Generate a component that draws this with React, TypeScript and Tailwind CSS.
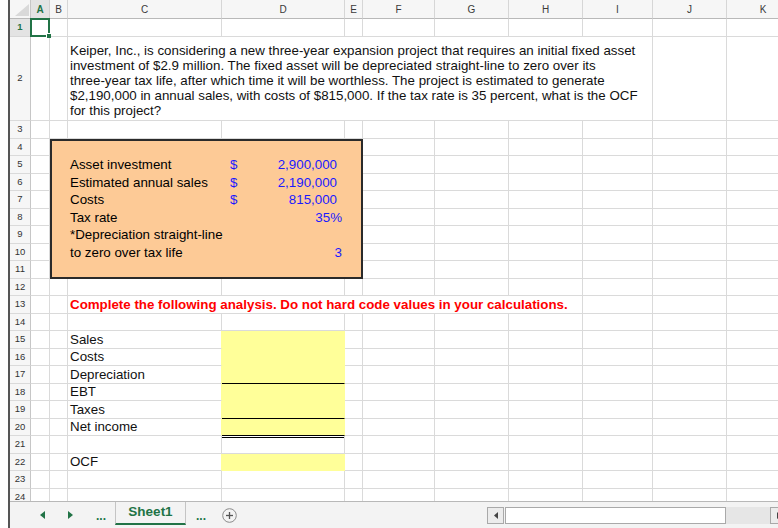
import React from "react";

const COLS = ["A", "B", "C", "D", "E", "F", "G", "H", "I", "J", "K"];

const LABELS: Record<number, string> = {
  15: "Sales",
  16: "Costs",
  17: "Depreciation",
  18: "EBT",
  19: "Taxes",
  20: "Net income",
  22: "OCF",
};

function GreenTri({ dir }: { dir: "l" | "r" }) {
  return (
    <svg width="5" height="8" viewBox="0 0 5 8">
      {dir === "l" ? <polygon points="5,0 5,8 0,4" fill="#217346" /> : <polygon points="0,0 0,8 5,4" fill="#217346" />}
    </svg>
  );
}

function OrangeBox() {
  const label = "col-start-2 flex items-center pl-[2px] whitespace-nowrap text-black";
  const val = "col-start-3 flex items-center justify-between text-[#1a1aff] whitespace-nowrap";
  return (
    <div className="row-span-8 col-span-4 bg-[#fdca96] border-2 border-[#2a2a2a] grid grid-cols-[16px_154px_123px_16px] grid-rows-[15.5px_repeat(6,17.5px)_15.5px] text-[13.33px] leading-[15px]">
      <div className={`${label} row-start-2`}>Asset investment</div>
      <div className={`${val} row-start-2 pl-[8px] pr-[8px]`}>
        <span>$</span>
        <span>2,900,000</span>
      </div>
      <div className={`${label} row-start-3`}>Estimated annual sales</div>
      <div className={`${val} row-start-3 pl-[8px] pr-[8px]`}>
        <span>$</span>
        <span>2,190,000</span>
      </div>
      <div className={`${label} row-start-4`}>Costs</div>
      <div className={`${val} row-start-4 pl-[8px] pr-[8px]`}>
        <span>$</span>
        <span>815,000</span>
      </div>
      <div className={`${label} row-start-5`}>Tax rate</div>
      <div className="col-start-3 row-start-5 flex items-center justify-end pr-[3px] text-[#1a1aff]">35%</div>
      <div className={`${label} row-start-6`}>*Depreciation straight-line</div>
      <div className={`${label} row-start-7`}>to zero over tax life</div>
      <div className="col-start-3 row-start-7 flex items-center justify-end pr-[3px] text-[#1a1aff]">3</div>
    </div>
  );
}

function dClass(r: number): string {
  if (r === 15 || r === 16 || r === 18 || r === 22) return "bg-[#ffff99] border-r border-b border-[#ffff99]";
  if (r === 17 || r === 19 || r === 20) return "bg-[#ffff99] border-r border-b border-r-[#ffff99] border-b-black";
  return "border-r border-b border-[#dadada]";
}

export default function App() {
  const cells: React.ReactNode[] = [];

  cells.push(
    <div key="corner" className="relative bg-[#f6f6f6] border-r border-b border-r-[#c6c6c6] border-b-[#b9b9b9]">
      <svg className="absolute right-[1px] bottom-[2px]" width="14" height="12" viewBox="0 0 14 12">
        <polygon points="0,12 14,12 14,0" fill="#d9d9d9" />
      </svg>
    </div>
  );
  COLS.forEach((c, i) =>
    cells.push(
      <div
        key={"h" + c}
        className={
          i === 0
            ? "flex items-center justify-center border-r border-b border-r-[#d0d0d0] border-b-[#b9b9b9] bg-[#e3e3e3] text-[10px] font-bold text-[#217346]"
            : "flex items-center justify-center border-r border-b border-r-[#d6d6d6] border-b-[#b9b9b9] bg-[#f6f6f6] text-[10px] text-[#3a3a3a]"
        }
      >
        {c}
      </div>
    )
  );

  for (let r = 1; r <= 24; r++) {
    cells.push(
      <div
        key={"r" + r}
        className={
          r === 1
            ? "flex items-center justify-center bg-[#e3e3e3] border-r border-b border-r-[#c6c6c6] border-b-[#d6d6d6] text-[9.5px] font-bold text-[#217346]"
            : "flex items-center justify-center bg-[#f6f6f6] border-r border-b border-r-[#c6c6c6] border-b-[#dadada] text-[9.5px] text-[#333]"
        }
      >
        {r}
      </div>
    );
    for (let c = 0; c < COLS.length; c++) {
      const key = COLS[c] + r;
      if (r >= 4 && r <= 11 && c >= 1 && c <= 4) {
        if (r === 4 && c === 1) cells.push(<OrangeBox key={key} />);
        continue;
      }
      if (r === 2 && c >= 3 && c <= 8) continue;
      if (r === 13 && c >= 3 && c <= 7) continue;

      if (r === 1 && c === 0) {
        cells.push(
          <div key={key} className="relative border-r border-b border-[#dadada]">
            <div className="absolute -left-[1px] -top-[1px] -right-[1px] -bottom-[1px] border-2 border-[#217346]" />
            <div className="absolute -right-[2px] -bottom-[2px] w-[5px] h-[5px] bg-[#217346] border-l border-t border-white" />
          </div>
        );
        continue;
      }
      if (r === 2 && c === 2) {
        cells.push(
          <div key={key} className="col-span-7 flex items-end pb-[2px] pl-[2px] border-r border-b border-[#dadada] text-[13.33px] leading-[15px] text-[#111] whitespace-nowrap">
            <div>
              Keiper, Inc., is considering a new three-year expansion project that requires an initial fixed asset
              <br />
              investment of $2.9 million. The fixed asset will be depreciated straight-line to zero over its
              <br />
              three-year tax life, after which time it will be worthless. The project is estimated to generate
              <br />
              $2,190,000 in annual sales, with costs of $815,000. If the tax rate is 35 percent, what is the OCF
              <br />
              for this project?
            </div>
          </div>
        );
        continue;
      }
      if (r === 13 && c === 2) {
        cells.push(
          <div key={key} className="col-span-6 flex items-center pl-[2px] border-r border-b border-[#dadada] text-[13.33px] leading-[15px] font-bold text-[#ff0000] whitespace-nowrap">
            Complete the following analysis. Do not hard code values in your calculations.
          </div>
        );
        continue;
      }
      if (c === 2 && LABELS[r]) {
        cells.push(
          <div key={key} className="flex items-center pl-[2px] border-r border-b border-b-[#dadada] border-r-[#ffff99] text-[13.33px] leading-[15px] text-[#111] whitespace-nowrap">
            {LABELS[r]}
          </div>
        );
        continue;
      }
      if (c === 3 && r >= 15 && r <= 22) {
        cells.push(
          <div key={key} className={dClass(r)}>
            {r === 21 ? <div className="mt-[1px] h-px bg-black" /> : null}
          </div>
        );
        continue;
      }
      cells.push(<div key={key} className="border-r border-b border-[#dadada]" />);
    }
  }

  return (
    <div className="flex w-[778px] h-[528px] overflow-hidden bg-white font-['Liberation_Sans',Arial,sans-serif]">
      <div className="w-[8px] shrink-0 bg-white" />
      <div className="w-[2px] shrink-0 bg-[#555]" />
      <div className="flex flex-col w-[768px] shrink-0">
        <div className="h-[501px] overflow-hidden">
          <div className="grid grid-cols-[21px_19px_18px_154px_123px_18px_72px_74px_74px_70px_74px_73px] grid-rows-[19px_18px_84px_repeat(22,17.5px)] w-[790px]">
            {cells}
          </div>
        </div>
        <div className="h-[27px] flex items-center bg-[#f3f3f3] border-t border-[#b8b8b8] overflow-hidden">
          <div className="ml-[23px] w-[18px] shrink-0 flex justify-center">
            <GreenTri dir="l" />
          </div>
          <div className="ml-[10px] w-[18px] shrink-0 flex justify-center">
            <GreenTri dir="r" />
          </div>
          <div className="ml-[12px] w-[20px] shrink-0 flex justify-center text-[12px] font-bold text-[#217346] leading-none pt-[2px]">...</div>
          <div className="ml-[4px] w-[71px] h-[23px] shrink-0 self-start flex items-center justify-center border-l border-r border-b-2 border-l-[#c4c4c4] border-r-[#c4c4c4] border-b-[#217346] text-[13.5px] font-bold text-[#217346]">
            Sheet1
          </div>
          <div className="ml-[5px] w-[20px] shrink-0 flex justify-center text-[12px] font-bold text-[#217346] leading-none pt-[2px]">...</div>
          <svg className="ml-[11px] shrink-0" width="15" height="15" viewBox="0 0 15 15">
            <circle cx="7.5" cy="7.5" r="6.8" fill="none" stroke="#8a8a8a" strokeWidth="1" />
            <line x1="7.5" y1="4" x2="7.5" y2="11" stroke="#555" strokeWidth="1.3" />
            <line x1="4" y1="7.5" x2="11" y2="7.5" stroke="#555" strokeWidth="1.3" />
          </svg>
          <div className="ml-[250px] flex items-center shrink-0">
            <div className="w-[17px] h-[17px] shrink-0 flex items-center justify-center bg-[#ececec] border border-[#a9a9a9]">
              <svg width="4" height="7" viewBox="0 0 4 7">
                <polygon points="4,0 4,7 0,3.5" fill="#444" />
              </svg>
            </div>
            <div className="ml-[1px] w-[221px] h-[17px] shrink-0 bg-white border border-[#a9a9a9]" />
            <div className="w-[44px] h-[17px] shrink-0 bg-[#e6e6e6]" />
            <div className="w-[17px] h-[17px] shrink-0 flex items-center justify-center bg-[#ececec] border border-[#a9a9a9]">
              <svg width="4" height="7" viewBox="0 0 4 7">
                <polygon points="0,0 0,7 4,3.5" fill="#444" />
              </svg>
            </div>
          </div>
        </div>
      </div>
    </div>
  );
}
